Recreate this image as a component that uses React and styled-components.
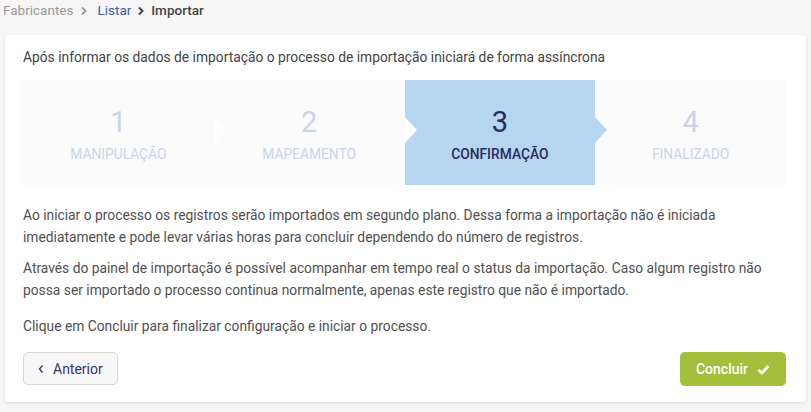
import React from "react";
import styled, { createGlobalStyle } from "styled-components";

const Global = createGlobalStyle`
  html, body { margin: 0; padding: 0; }
  body {
    background: #f6f6f6;
    font-family: Roboto, "Liberation Sans", Arial, sans-serif;
    color: #555;
  }
  * { box-sizing: border-box; }
`;

const Page = styled.div`
  width: 811px;
  height: 412px;
  overflow: hidden;
`;

const Breadcrumb = styled.nav`
  display: flex;
  align-items: center;
  height: 21px;
  padding-left: 3px;
  font-size: 13.5px;
  line-height: 21px;
`;

const Crumb = styled.span`
  color: ${(p) => (p.$kind === "muted" ? "#9a9a9a" : p.$kind === "link" ? "#3f5ca4" : "#444")};
  font-weight: ${(p) => (p.$kind === "current" ? 500 : 400)};
`;

const Sep = styled.span`
  display: inline-flex;
  margin: 0 ${(p) => p.$gap || 6}px 0 ${(p) => p.$left || 6}px;
  color: ${(p) => p.$color};
`;

const Card = styled.section`
  margin: 14px 5px 0;
  background: #fff;
  border-radius: 3px;
  box-shadow: 0 1px 3px rgba(0, 0, 0, 0.12);
  padding: 12px 20px 16px 18px;
`;

const Intro = styled.p`
  margin: 0 0 13px;
  font-size: 13.8px;
  line-height: 20px;
  color: #444;
`;

const Steps = styled.div`
  display: flex;
  height: 105px;
  background: #fbfbfc;
`;

const Step = styled.div`
  position: relative;
  flex: 1;
  display: flex;
  flex-direction: column;
  align-items: center;
  padding-top: 26px;
  background: ${(p) => (p.$active ? "#b5d5f0" : "transparent")};
  color: ${(p) => (p.$active ? "#2b2a5c" : "#c9d4e8")};

  &::after {
    content: "";
    display: ${(p) => (p.$last ? "none" : "block")};
    position: absolute;
    right: -12px;
    top: 37px;
    width: 0;
    height: 0;
    border-top: 13px solid transparent;
    border-bottom: 13px solid transparent;
    border-left: 12px solid ${(p) => (p.$active ? "#b5d5f0" : "#fefefe")};
    z-index: 2;
  }
`;

const StepNumber = styled.div`
  font-size: 29px;
  line-height: 32px;
  font-weight: 400;
`;

const StepLabel = styled.div`
  margin-top: 8px;
  font-size: 13.8px;
  line-height: 16px;
  font-weight: ${(p) => (p.$active ? 500 : 400)};
  text-transform: uppercase;
`;

const Body = styled.div`
  margin-top: 19px;
`;

const Para = styled.p`
  margin: 0 0 ${(p) => p.$mb || 0}px;
  font-size: 13.8px;
  line-height: 22px;
  color: #505050;
`;

const Actions = styled.div`
  display: flex;
  justify-content: space-between;
  margin-top: 15px;
`;

const SecondaryButton = styled.button`
  display: inline-flex;
  align-items: center;
  gap: 9px;
  height: 33px;
  width: 95px;
  padding: 0 12px 0 14px;
  border: 1px solid #d6d6d6;
  border-radius: 5px;
  background: #f7f7f7;
  color: #34346a;
  font-family: inherit;
  font-size: 14px;
`;

const PrimaryButton = styled.button`
  display: inline-flex;
  align-items: center;
  justify-content: center;
  gap: 9px;
  height: 34px;
  width: 106px;
  border: none;
  border-radius: 5px;
  background: #a2c03b;
  color: #fff;
  font-family: inherit;
  font-size: 14px;
  font-weight: 500;
`;

const Chevron = ({ size = 8, color = "currentColor", w = 2 }) => (
  <svg width={size} height={size + 2} viewBox="0 0 8 10" fill="none">
    <path d="M2 1.5 L5.5 5 L2 8.5" stroke={color} strokeWidth={w} />
  </svg>
);

const steps = [
  { n: 1, label: "Manipulação" },
  { n: 2, label: "Mapeamento" },
  { n: 3, label: "Confirmação", active: true },
  { n: 4, label: "Finalizado" },
];

export default function App() {
  return (
    <Page>
      <Global />
      <Breadcrumb>
        <Crumb $kind="muted">Fabricantes</Crumb>
        <Sep $color="#9a9a9a" $left={7} $gap={9}>
          <Chevron color="#9a9a9a" w={1.8} />
        </Sep>
        <Crumb $kind="link">Listar</Crumb>
        <Sep $color="#444" $left={6} $gap={6}>
          <Chevron color="#444" w={2} />
        </Sep>
        <Crumb $kind="current">Importar</Crumb>
      </Breadcrumb>
      <Card>
        <Intro>
          Após informar os dados de importação o processo de importação iniciará de forma assíncrona
        </Intro>
        <Steps>
          {steps.map((s, i) => (
            <Step key={s.n} $active={s.active} $last={i === steps.length - 1}>
              <StepNumber>{s.n}</StepNumber>
              <StepLabel $active={s.active}>{s.label}</StepLabel>
            </Step>
          ))}
        </Steps>
        <Body>
          <Para $mb={9}>
            Ao iniciar o processo os registros serão importados em segundo plano. Dessa forma a
            importação não é iniciada imediatamente e pode levar várias horas para concluir
            dependendo do número de registros.
          </Para>
          <Para $mb={14}>
            Através do painel de importação é possível acompanhar em tempo real o status da
            importação. Caso algum registro não possa ser importado o processo continua
            normalmente, apenas este registro que não é importado.
          </Para>
          <Para>Clique em Concluir para finalizar configuração e iniciar o processo.</Para>
        </Body>
        <Actions>
          <SecondaryButton>
            <svg width="6" height="10" viewBox="0 0 6 10" fill="none">
              <path d="M4.5 1.5 L1.5 5 L4.5 8.5" stroke="#34346a" strokeWidth="1.3" />
            </svg>
            Anterior
          </SecondaryButton>
          <PrimaryButton>
            Concluir
            <svg width="13" height="11" viewBox="0 0 13 11" fill="none">
              <path d="M1.5 5.8 L4.8 9 L11.5 2" stroke="#fff" strokeWidth="2.8" strokeLinejoin="round" />
            </svg>
          </PrimaryButton>
        </Actions>
      </Card>
    </Page>
  );
}
